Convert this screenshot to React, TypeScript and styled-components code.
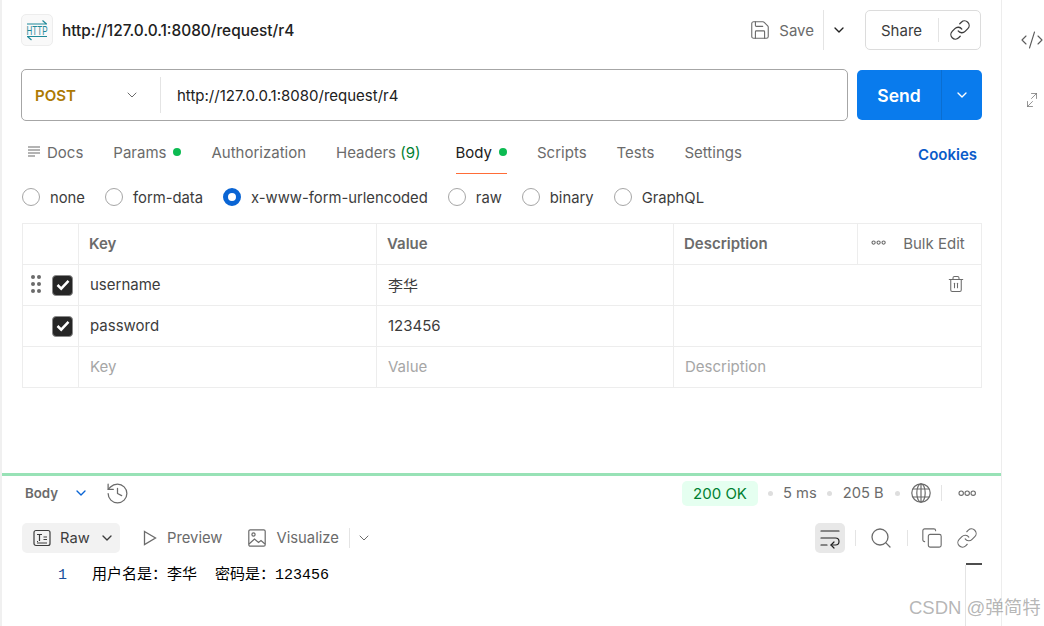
import styled, { createGlobalStyle } from 'styled-components';
import { ChevronDown, Save, Link, CodeXml, ArrowUpRight, ArrowDownLeft, Trash2, History, Search, Copy, WrapText } from 'lucide-react';

const GlobalStyle = createGlobalStyle`
  html, body {
    margin: 0;
    width: 1044px;
    height: 626px;
    overflow: hidden;
    background: #fff;
    font-family: Inter, "Noto Sans CJK SC", sans-serif;
    font-size: 15px;
    color: #212121;
  }
  * { box-sizing: border-box; }
`;

const Page = styled.div`
  position: relative;
  display: flex;
  width: 1044px;
  height: 626px;
  overflow: hidden;
`;

const Main = styled.div`
  width: 1002px;
  height: 626px;
  display: flex;
  flex-direction: column;
  border-left: 2px solid #f0f0f0;
  border-right: 1px solid #ededed;
`;

const Side = styled.div`
  flex: 1;
  display: flex;
  flex-direction: column;
  align-items: center;
  padding: 28px 0 0 18px;
  gap: 40px;
  color: #5c5c5c;
`;

const SwapIcon = styled.div`
  position: relative;
  width: 16px;
  height: 16px;
  svg { position: absolute; }
  svg:first-child { top: -2px; right: 0; }
  svg:last-child { bottom: -2px; left: 0; }
`;

const RequestPane = styled.div`
  height: 471px;
  padding: 10px 19px 0 19px;
  display: flex;
  flex-direction: column;
`;

const HeaderRow = styled.div`
  height: 40px;
  display: flex;
  align-items: center;
  padding-right: 1px;
`;

const HttpBadge = styled.div`
  width: 32px;
  height: 32px;
  border: 1px solid #ededed;
  border-radius: 5px;
  background: #f9f9f9;
  display: flex;
  align-items: center;
  justify-content: center;
  margin-right: 9px;
`;

const Title = styled.div`
  font-weight: 500;
  font-size: 15.4px;
  flex: 1;
`;

const SaveGroup = styled.div`
  display: flex;
  align-items: center;
  height: 40px;
  color: #6b6b6b;
  margin-right: 18px;
`;

const SaveLabel = styled.span`
  margin: 0 9px 0 8px;
`;

const Divider = styled.span<{ $h: number; $ml?: number; $mr?: number }>`
  width: 1px;
  height: ${(p) => p.$h}px;
  margin-left: ${(p) => p.$ml ?? 0}px;
  margin-right: ${(p) => p.$mr ?? 0}px;
  background: #e4e4e4;
  flex: none;
`;

const SaveCaret = styled.span`
  display: flex;
  margin-left: 7px;
  color: #212121;
`;

const ShareBox = styled.div`
  width: 116px;
  height: 40px;
  border: 1px solid #dcdcdc;
  border-radius: 5px;
  display: flex;
  align-items: center;
  color: #3c3c3c;
  padding-left: 15px;
`;

const UrlRow = styled.div`
  margin-top: 19px;
  display: flex;
  gap: 9px;
  align-items: flex-start;
`;

const UrlBox = styled.div`
  width: 827px;
  height: 52px;
  border: 1px solid #a6a6a6;
  border-radius: 5px;
  display: flex;
  align-items: center;
`;

const Method = styled.div`
  width: 139px;
  height: 36px;
  padding: 0 13px;
  display: flex;
  align-items: center;
  justify-content: space-between;
  font-weight: 600;
  color: #ad7a03;
  border-right: 1px solid #e4e4e4;
  svg { color: #6b6b6b; margin-right: 7px; }
`;

const UrlText = styled.div`
  padding-left: 16px;
  color: #212121;
`;

const SendButton = styled.div`
  width: 125px;
  height: 50px;
  margin-top: 1px;
  background: #097bed;
  border-radius: 5px;
  display: flex;
  align-items: center;
  color: #fff;
`;

const SendLabel = styled.div`
  width: 85px;
  height: 100%;
  display: flex;
  align-items: center;
  justify-content: center;
  font-weight: 600;
  font-size: 17.5px;
  border-right: 1px solid #0a6ed1;
`;

const SendCaret = styled.div`
  flex: 1;
  display: flex;
  justify-content: center;
`;

const TabRow = styled.div`
  margin-top: 17px;
  height: 35px;
  display: flex;
  align-items: flex-start;
  gap: 30px;
  padding-left: 7px;
`;

const Tab = styled.div<{ $active?: boolean }>`
  height: 36px;
  padding-top: 6px;
  display: flex;
  align-items: flex-start;
  gap: 5px;
  color: ${(p) => (p.$active ? '#212121' : '#6b6b6b')};
  line-height: 18px;
  ${(p) => p.$active && 'border-bottom: 1px solid #ff6c37; margin-left: 5px;'}
`;

const Dot = styled.span`
  width: 8px;
  height: 8px;
  border-radius: 50%;
  background: #0cbb52;
  margin: 4px 0 0 2px;
`;

const Count = styled.span`
  color: #007f31;
`;

const Cookies = styled.div`
  margin: 8px 5px 0 auto;
  color: #0a5bc9;
  font-weight: 600;
  line-height: 18px;
`;

const LinesIcon = styled.span`
  display: inline-flex;
  margin: 1px 1px 0 -1px;
`;

const RadioRow = styled.div`
  margin-top: 14px;
  height: 20px;
  display: flex;
  align-items: center;
  gap: 20px;
  padding-left: 1px;
  font-size: 14.8px;
`;

const RadioItem = styled.div`
  display: flex;
  align-items: center;
  gap: 10px;
  color: #3c3c3c;
`;

const RadioLabel = styled.span`
  padding-top: 2px;
`;

const RadioDot = styled.span<{ $on?: boolean }>`
  width: 18px;
  height: 18px;
  border-radius: 50%;
  border: ${(p) => (p.$on ? '5.5px solid #0a65d4' : '1px solid #a6a6a6')};
  background: #fff;
`;

const Table = styled.div`
  margin-top: 16px;
  margin-left: 1px;
  width: 960px;
  border: 1px solid #ededed;
`;

const Row = styled.div`
  display: grid;
  grid-template-columns: 55px 298px 297px 1fr;
  height: 41px;
  border-top: 1px solid #ededed;
  &:first-child { border-top: 0; height: 40px; }
`;

const Cell = styled.div<{ $head?: boolean; $ghost?: boolean }>`
  display: flex;
  align-items: center;
  padding: 0 0 2px 11px;
  border-left: 1px solid #ededed;
  font-weight: ${(p) => (p.$head ? 600 : 400)};
  color: ${(p) => (p.$ghost ? '#a6a6a6' : p.$head ? '#6b6b6b' : '#3c3c3c')};
  ${(p) => p.$head && 'padding-left: 10px;'}
  &:first-child { border-left: 0; padding: 0; }
`;

const SplitCell = styled(Cell)`
  padding: 0;
  justify-content: space-between;
`;

const DescHead = styled.span`
  padding: 0 0 2px 10px;
`;

const BulkEdit = styled.div`
  width: 124px;
  height: 100%;
  border-left: 1px solid #ededed;
  display: flex;
  align-items: center;
  gap: 17px;
  padding: 0 0 2px 13px;
  font-weight: 400;
  color: #6b6b6b;
`;

const CheckWrap = styled.div`
  position: relative;
  width: 100%;
  height: 100%;
  display: flex;
  align-items: center;
  padding-left: 29px;
`;

const Check = styled.span`
  width: 21px;
  height: 21px;
  border-radius: 4px;
  background: #262626;
  border: 1px solid #8a8a8a;
  display: flex;
  align-items: center;
  justify-content: center;
`;

const Grip = styled.svg`
  position: absolute;
  left: 8px;
  top: 10px;
`;

const TrashCell = styled(Cell)`
  justify-content: flex-end;
  padding-right: 16px;
  color: #6b6b6b;
`;

const ResponsePane = styled.div`
  flex: 1;
  margin-top: 2px;
  border-top: 3px solid #98e2b6;
  padding: 0 19px 0 20px;
  display: flex;
  flex-direction: column;
`;

const MetaRow = styled.div`
  height: 34px;
  display: flex;
  align-items: center;
  color: #6b6b6b;
`;

const BodyLabel = styled.div`
  font-weight: 600;
  font-size: 13.3px;
  margin: 0 15px 0 3px;
`;

const BodyIcons = styled.div`
  display: flex;
  align-items: center;
  gap: 16px;
  flex: 1;
`;

const Status = styled.div`
  width: 76px;
  height: 25px;
  background: #e5fff0;
  border-radius: 5px;
  display: flex;
  align-items: center;
  justify-content: center;
  color: #007f31;
`;

const Sep = styled.span<{ $m: number }>`
  width: 5px;
  height: 5px;
  border-radius: 50%;
  background: #dedede;
  margin: 0 ${(p) => p.$m}px;
`;

const MetaValue = styled.span`
  font-size: 14.7px;
`;

const MetaMore = styled.span`
  display: flex;
  margin-right: 6px;
`;

const ToolRow = styled.div`
  margin-top: 13px;
  height: 30px;
  display: flex;
  align-items: center;
  color: #6b6b6b;
`;

const RawButton = styled.div`
  width: 98px;
  height: 30px;
  border-radius: 5px;
  background: #f2f2f2;
  color: #3c3c3c;
  display: flex;
  align-items: center;
  padding-left: 11px;
  gap: 9px;
  margin-right: 23px;
  font-size: 14.7px;
`;

const ViewItem = styled.div<{ $mr: number }>`
  display: flex;
  align-items: center;
  gap: 10px;
  font-size: 14.8px;
  margin-right: ${(p) => p.$mr}px;
`;

const ViewCaret = styled.span`
  display: flex;
  margin-left: 6px;
`;

const WrapButton = styled.div`
  width: 30px;
  height: 30px;
  border-radius: 5px;
  background: #e8e8e8;
  color: #212121;
  display: flex;
  align-items: center;
  justify-content: center;
`;

const RightTools = styled.div`
  margin-left: auto;
  display: flex;
  align-items: center;
  margin-right: 4px;
`;

const IconGap = styled.span`
  display: flex;
  margin-right: 13px;
`;

const CodeLine = styled.div`
  margin-top: 14px;
  display: flex;
  font-family: "Liberation Mono", "Noto Sans CJK SC", monospace;
  font-size: 15px;
  line-height: 18px;
  color: #000;
  white-space: pre;
`;

const LineNo = styled.span`
  width: 70px;
  padding-left: 36px;
  color: #1a4f9c;
`;

const ScrollMark = styled.div`
  position: absolute;
  left: 965px;
  top: 563px;
  width: 17px;
  height: 63px;
  &::before {
    content: '';
    display: block;
    height: 2px;
    margin-left: 1px;
    background: #4d4d4d;
  }
  &::after {
    content: '';
    display: block;
    width: 1px;
    height: 61px;
    background: #e4e4e4;
  }
`;

const Watermark = styled.div`
  position: absolute;
  left: 909px;
  top: 596px;
  font-family: "Liberation Sans", "Noto Sans CJK SC", sans-serif;
  font-size: 18.5px;
  line-height: 24px;
  color: rgba(120, 120, 120, 0.55);
  white-space: nowrap;
`;

function HttpLogo() {
  return (
    <svg width="22" height="24" viewBox="0 0 22 24" fill="none" stroke="#1f8a99" strokeWidth="1.2">
      <path d="M1 6h20M16.5 2.5 20.5 6" />
      <path d="M1 18.5h20M5.5 22 1.5 18.5" />
      <text transform="translate(0.5 17) scale(0.62 1)" fontFamily="Liberation Sans, sans-serif" fontSize="13" stroke="none" fill="#1f8a99">HTTP</text>
    </svg>
  );
}

function CheckBox() {
  return (
    <Check>
      <svg width="14" height="12" viewBox="0 0 14 12" fill="none" stroke="#fff" strokeWidth="2.5">
        <path d="M1.5 6 5.2 9.7 12.5 1.8" />
      </svg>
    </Check>
  );
}

function HollowDots({ r, step }: { r: number; step: number }) {
  const w = step * 2 + r * 2 + 2;
  return (
    <svg width={w} height={r * 2 + 2} fill="none" stroke="currentColor" strokeWidth="1.1">
      {[0, 1, 2].map((i) => (
        <circle key={i} cx={r + 1 + i * step} cy={r + 1} r={r} />
      ))}
    </svg>
  );
}

function GlobeIcon() {
  return (
    <svg width="20" height="20" viewBox="0 0 20 20" fill="none" stroke="#6b6b6b" strokeWidth="1.2">
      <circle cx="10" cy="10" r="9.2" />
      <ellipse cx="10" cy="10" rx="4.2" ry="9.2" />
      <path d="M10 .8v18.4M2 6h16M2 14h16" />
    </svg>
  );
}

function PlayIcon() {
  return (
    <svg width="14" height="16" viewBox="0 0 14 16" fill="none" stroke="#6b6b6b" strokeWidth="1.3">
      <path d="M1.5 1.5 12.5 8 1.5 14.5z" />
    </svg>
  );
}

function ImageIcon() {
  return (
    <svg width="18" height="18" viewBox="0 0 18 18" fill="none" stroke="#6b6b6b" strokeWidth="1.2">
      <rect x=".8" y=".8" width="16.4" height="16.4" rx="1.5" />
      <circle cx="5.5" cy="5.5" r="1.6" />
      <path d="M1 15l5.5-5 4 3.5 2.5-2 4 3.5" />
    </svg>
  );
}

export default function App() {
  return (
    <Page>
      <GlobalStyle />
      <Main>
        <RequestPane>
          <HeaderRow>
            <HttpBadge><HttpLogo /></HttpBadge>
            <Title>http://127.0.0.1:8080/request/r4</Title>
            <SaveGroup>
              <Save size={22} strokeWidth={1.2} />
              <SaveLabel>Save</SaveLabel>
              <Divider $h={40} />
              <SaveCaret><ChevronDown size={16} /></SaveCaret>
            </SaveGroup>
            <ShareBox>
              <span>Share</span>
              <Divider $h={24} $ml={16} $mr={10} />
              <Link size={22} strokeWidth={1.4} />
            </ShareBox>
          </HeaderRow>

          <UrlRow>
            <UrlBox>
              <Method>POST <ChevronDown size={16} strokeWidth={1.5} /></Method>
              <UrlText>http://127.0.0.1:8080/request/r4</UrlText>
            </UrlBox>
            <SendButton>
              <SendLabel>Send</SendLabel>
              <SendCaret><ChevronDown size={16} /></SendCaret>
            </SendButton>
          </UrlRow>

          <TabRow>
            <Tab>
              <LinesIcon>
                <svg width="14" height="14" viewBox="0 0 14 14" stroke="#6b6b6b" strokeWidth="1.2">
                  <path d="M1 2h12M1 5h12M1 8h12M1 11h7" />
                </svg>
              </LinesIcon>
              Docs
            </Tab>
            <Tab>Params <Dot /></Tab>
            <Tab>Authorization</Tab>
            <Tab><span>Headers <Count>(9)</Count></span></Tab>
            <Tab $active>Body <Dot /></Tab>
            <Tab>Scripts</Tab>
            <Tab>Tests</Tab>
            <Tab>Settings</Tab>
            <Cookies>Cookies</Cookies>
          </TabRow>

          <RadioRow>
            <RadioItem><RadioDot /><RadioLabel>none</RadioLabel></RadioItem>
            <RadioItem><RadioDot /><RadioLabel>form-data</RadioLabel></RadioItem>
            <RadioItem><RadioDot $on /><RadioLabel>x-www-form-urlencoded</RadioLabel></RadioItem>
            <RadioItem><RadioDot /><RadioLabel>raw</RadioLabel></RadioItem>
            <RadioItem><RadioDot /><RadioLabel>binary</RadioLabel></RadioItem>
            <RadioItem><RadioDot /><RadioLabel>GraphQL</RadioLabel></RadioItem>
          </RadioRow>

          <Table>
            <Row>
              <Cell />
              <Cell $head>Key</Cell>
              <Cell $head>Value</Cell>
              <SplitCell $head>
                <DescHead>Description</DescHead>
                <BulkEdit>
                  <HollowDots r={1.6} step={5} />
                  Bulk Edit
                </BulkEdit>
              </SplitCell>
            </Row>
            <Row>
              <Cell>
                <CheckWrap>
                  <Grip width="10" height="18" viewBox="0 0 10 18" fill="#6b6b6b">
                    <circle cx="2" cy="2" r="2" />
                    <circle cx="8" cy="2" r="2" />
                    <circle cx="2" cy="9" r="2" />
                    <circle cx="8" cy="9" r="2" />
                    <circle cx="2" cy="16" r="2" />
                    <circle cx="8" cy="16" r="2" />
                  </Grip>
                  <CheckBox />
                </CheckWrap>
              </Cell>
              <Cell>username</Cell>
              <Cell>李华</Cell>
              <TrashCell><Trash2 size={18} strokeWidth={1.4} /></TrashCell>
            </Row>
            <Row>
              <Cell><CheckWrap><CheckBox /></CheckWrap></Cell>
              <Cell>password</Cell>
              <Cell>123456</Cell>
              <Cell />
            </Row>
            <Row>
              <Cell />
              <Cell $ghost>Key</Cell>
              <Cell $ghost>Value</Cell>
              <Cell $ghost>Description</Cell>
            </Row>
          </Table>
        </RequestPane>

        <ResponsePane>
          <MetaRow>
            <BodyLabel>Body</BodyLabel>
            <BodyIcons>
              <ChevronDown size={16} color="#0a65d4" />
              <History size={25} strokeWidth={1.2} />
            </BodyIcons>
            <Status>200 OK</Status>
            <Sep $m={10} />
            <MetaValue>5 ms</MetaValue>
            <Sep $m={10.5} />
            <MetaValue>205 B</MetaValue>
            <Sep $m={11} />
            <GlobeIcon />
            <Divider $h={16} $ml={10} $mr={16} />
            <MetaMore><HollowDots r={2.2} step={6} /></MetaMore>
          </MetaRow>

          <ToolRow>
            <RawButton>
              <svg width="18" height="18" viewBox="0 0 18 18" fill="none" stroke="#3c3c3c" strokeWidth="1.2">
                <rect x="1" y="1.5" width="16" height="15" rx="2" />
                <path d="M4 5.5h5M6.5 5.5V12M4 12.5h1M10.5 8h3.5M10.5 10.5h3.5M4 14h10" />
              </svg>
              Raw
              <ChevronDown size={16} color="#3c3c3c" />
            </RawButton>
            <ViewItem $mr={26}><PlayIcon />Preview</ViewItem>
            <ViewItem $mr={10}><ImageIcon />Visualize</ViewItem>
            <Divider $h={20} />
            <ViewCaret><ChevronDown size={16} strokeWidth={1.5} /></ViewCaret>
            <RightTools>
              <WrapButton><WrapText size={24} strokeWidth={1.2} /></WrapButton>
              <Divider $h={16} $ml={10} $mr={13} />
              <Search size={24} strokeWidth={1.3} />
              <Divider $h={16} $ml={14} $mr={13} />
              <IconGap><Copy size={22} strokeWidth={1.2} /></IconGap>
              <Link size={22} strokeWidth={1.2} />
            </RightTools>
          </ToolRow>

          <CodeLine>
            <LineNo>1</LineNo>
            <span>用户名是：李华  密码是：123456</span>
          </CodeLine>
        </ResponsePane>
      </Main>

      <Side>
        <CodeXml size={24} strokeWidth={1.1} />
        <SwapIcon>
          <ArrowUpRight size={12} strokeWidth={1.3} />
          <ArrowDownLeft size={12} strokeWidth={1.3} />
        </SwapIcon>
      </Side>

      <ScrollMark />
      <Watermark>CSDN @弹简特</Watermark>
    </Page>
  );
}
